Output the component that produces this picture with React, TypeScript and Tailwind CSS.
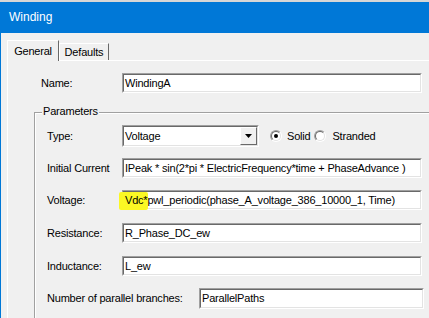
import React from 'react'

function Sunken({ className = '', children }: { className?: string; children?: React.ReactNode }) {
  return (
    <div className={`relative border border-[#a0a0a0] border-b-white border-r-white ${className}`}>
      <div className="h-full border border-[#696969] border-b-[#e3e3e3] border-r-[#e3e3e3] bg-white flex items-center pl-[1px] text-[11px] text-black whitespace-nowrap overflow-hidden">
        {children}
      </div>
    </div>
  )
}

function Radio({ checked }: { checked?: boolean }) {
  return (
    <div className="w-[12px] h-[12px] rounded-full border border-[#a0a0a0] border-b-white border-r-white">
      <div className="w-full h-full rounded-full border border-[#696969] border-b-[#e3e3e3] border-r-[#e3e3e3] bg-white flex items-center justify-center">
        {checked && <div className="w-[4px] h-[4px] rounded-full bg-black" />}
      </div>
    </div>
  )
}

function Field({ label, labelW = 'w-[75px]', mt, children }: { label: string; labelW?: string; mt: string; children: React.ReactNode }) {
  return (
    <div className={`flex items-center pl-[11px] ${mt}`}>
      <span className={`${labelW} shrink-0`}>{label}</span>
      {children}
    </div>
  )
}

export default function App() {
  return (
    <div className="w-[429px] h-[318px] overflow-hidden bg-[#f0f0f0] text-[11px] leading-[13px] tracking-[-0.2px] text-black font-['Liberation_Sans',Arial,sans-serif]">
      <div className="h-[2px] bg-[#d6d6d6]" />
      <div className="h-[31px] bg-[#0078d7] flex items-center pl-[9px] text-white text-[12px] tracking-normal">Winding</div>

      <div className="h-[285px] border-l border-[#0078d7] pl-[6px] flex flex-col">
        {/* tabs */}
        <div className="h-[27px] flex items-end shrink-0">
          <div className="relative z-10 -mb-[1px] h-[21px] w-[52px] bg-[#f0f0f0] border-t border-l border-white border-r border-r-[#696969] flex items-center justify-center">
            General
          </div>
          <div className="h-[17px] w-[50px] border-t border-l border-white border-r border-r-[#696969] flex items-center justify-center pt-[1px]">
            Defaults
          </div>
        </div>

        {/* panel */}
        <div className="flex-1 border-t border-l border-white">
          <div className="flex items-center mt-[12px] pl-[33px]">
            <span className="w-[81px] shrink-0">Name:</span>
            <Sunken className="w-[300px] h-[20px] shrink-0">WindingA</Sunken>
          </div>

          <div className="relative ml-[26px] mt-[19px] border-t border-l border-[#a0a0a0] w-[420px]">
            <span className="absolute left-[7px] -top-[8px] px-[1px] bg-[#f0f0f0]">Parameters</span>
            <div className="border-t border-l border-white pb-[40px]">
              <Field label="Type:" mt="mt-[11px]">
                <div className="relative w-[137px] h-[22px] shrink-0 border border-[#a0a0a0] border-b-white border-r-white">
                  <div className="h-full border border-[#696969] border-b-[#e3e3e3] border-r-[#e3e3e3] bg-white flex items-center pl-[1px]">
                    <span className="flex-1">Voltage</span>
                    <div className="w-[17px] h-[18px] border border-white border-b-[#696969] border-r-[#696969] bg-[#f0f0f0] flex items-center justify-center">
                      <svg width="7" height="4" viewBox="0 0 7 4">
                        <polygon points="0,0 7,0 3.5,4" fill="#000" />
                      </svg>
                    </div>
                  </div>
                </div>
                <div className="ml-[11px] flex items-center">
                  <Radio checked />
                  <span className="ml-[5px]">Solid</span>
                  <div className="ml-[4px]">
                    <Radio />
                  </div>
                  <span className="ml-[6px]">Stranded</span>
                </div>
              </Field>

              <Field label="Initial Current" mt="mt-[11px]">
                <Sunken className="w-[300px] h-[20px] shrink-0">IPeak * sin(2*pi * ElectricFrequency*time + PhaseAdvance )</Sunken>
              </Field>

              <Field label="Voltage:" mt="mt-[12px]">
                <Sunken className="w-[300px] h-[20px] shrink-0">
                  <div className="absolute z-10 -left-[4px] top-[1px] w-[29px] h-[18px] bg-[#fbf824] rounded-[2px]" />
                  <span className="relative z-20">Vdc*pwl_periodic(phase_A_voltage_386_10000_1, Time)</span>
                </Sunken>
              </Field>

              <Field label="Resistance:" mt="mt-[13px]">
                <Sunken className="w-[300px] h-[20px] shrink-0">R_Phase_DC_ew</Sunken>
              </Field>

              <Field label="Inductance:" mt="mt-[13px]">
                <Sunken className="w-[300px] h-[20px] shrink-0">L_ew</Sunken>
              </Field>

              <Field label="Number of parallel branches:" labelW="w-[152px]" mt="mt-[12px]">
                <Sunken className="w-[225px] h-[21px] shrink-0">ParallelPaths</Sunken>
              </Field>
            </div>
          </div>
        </div>
      </div>
    </div>
  )
}
